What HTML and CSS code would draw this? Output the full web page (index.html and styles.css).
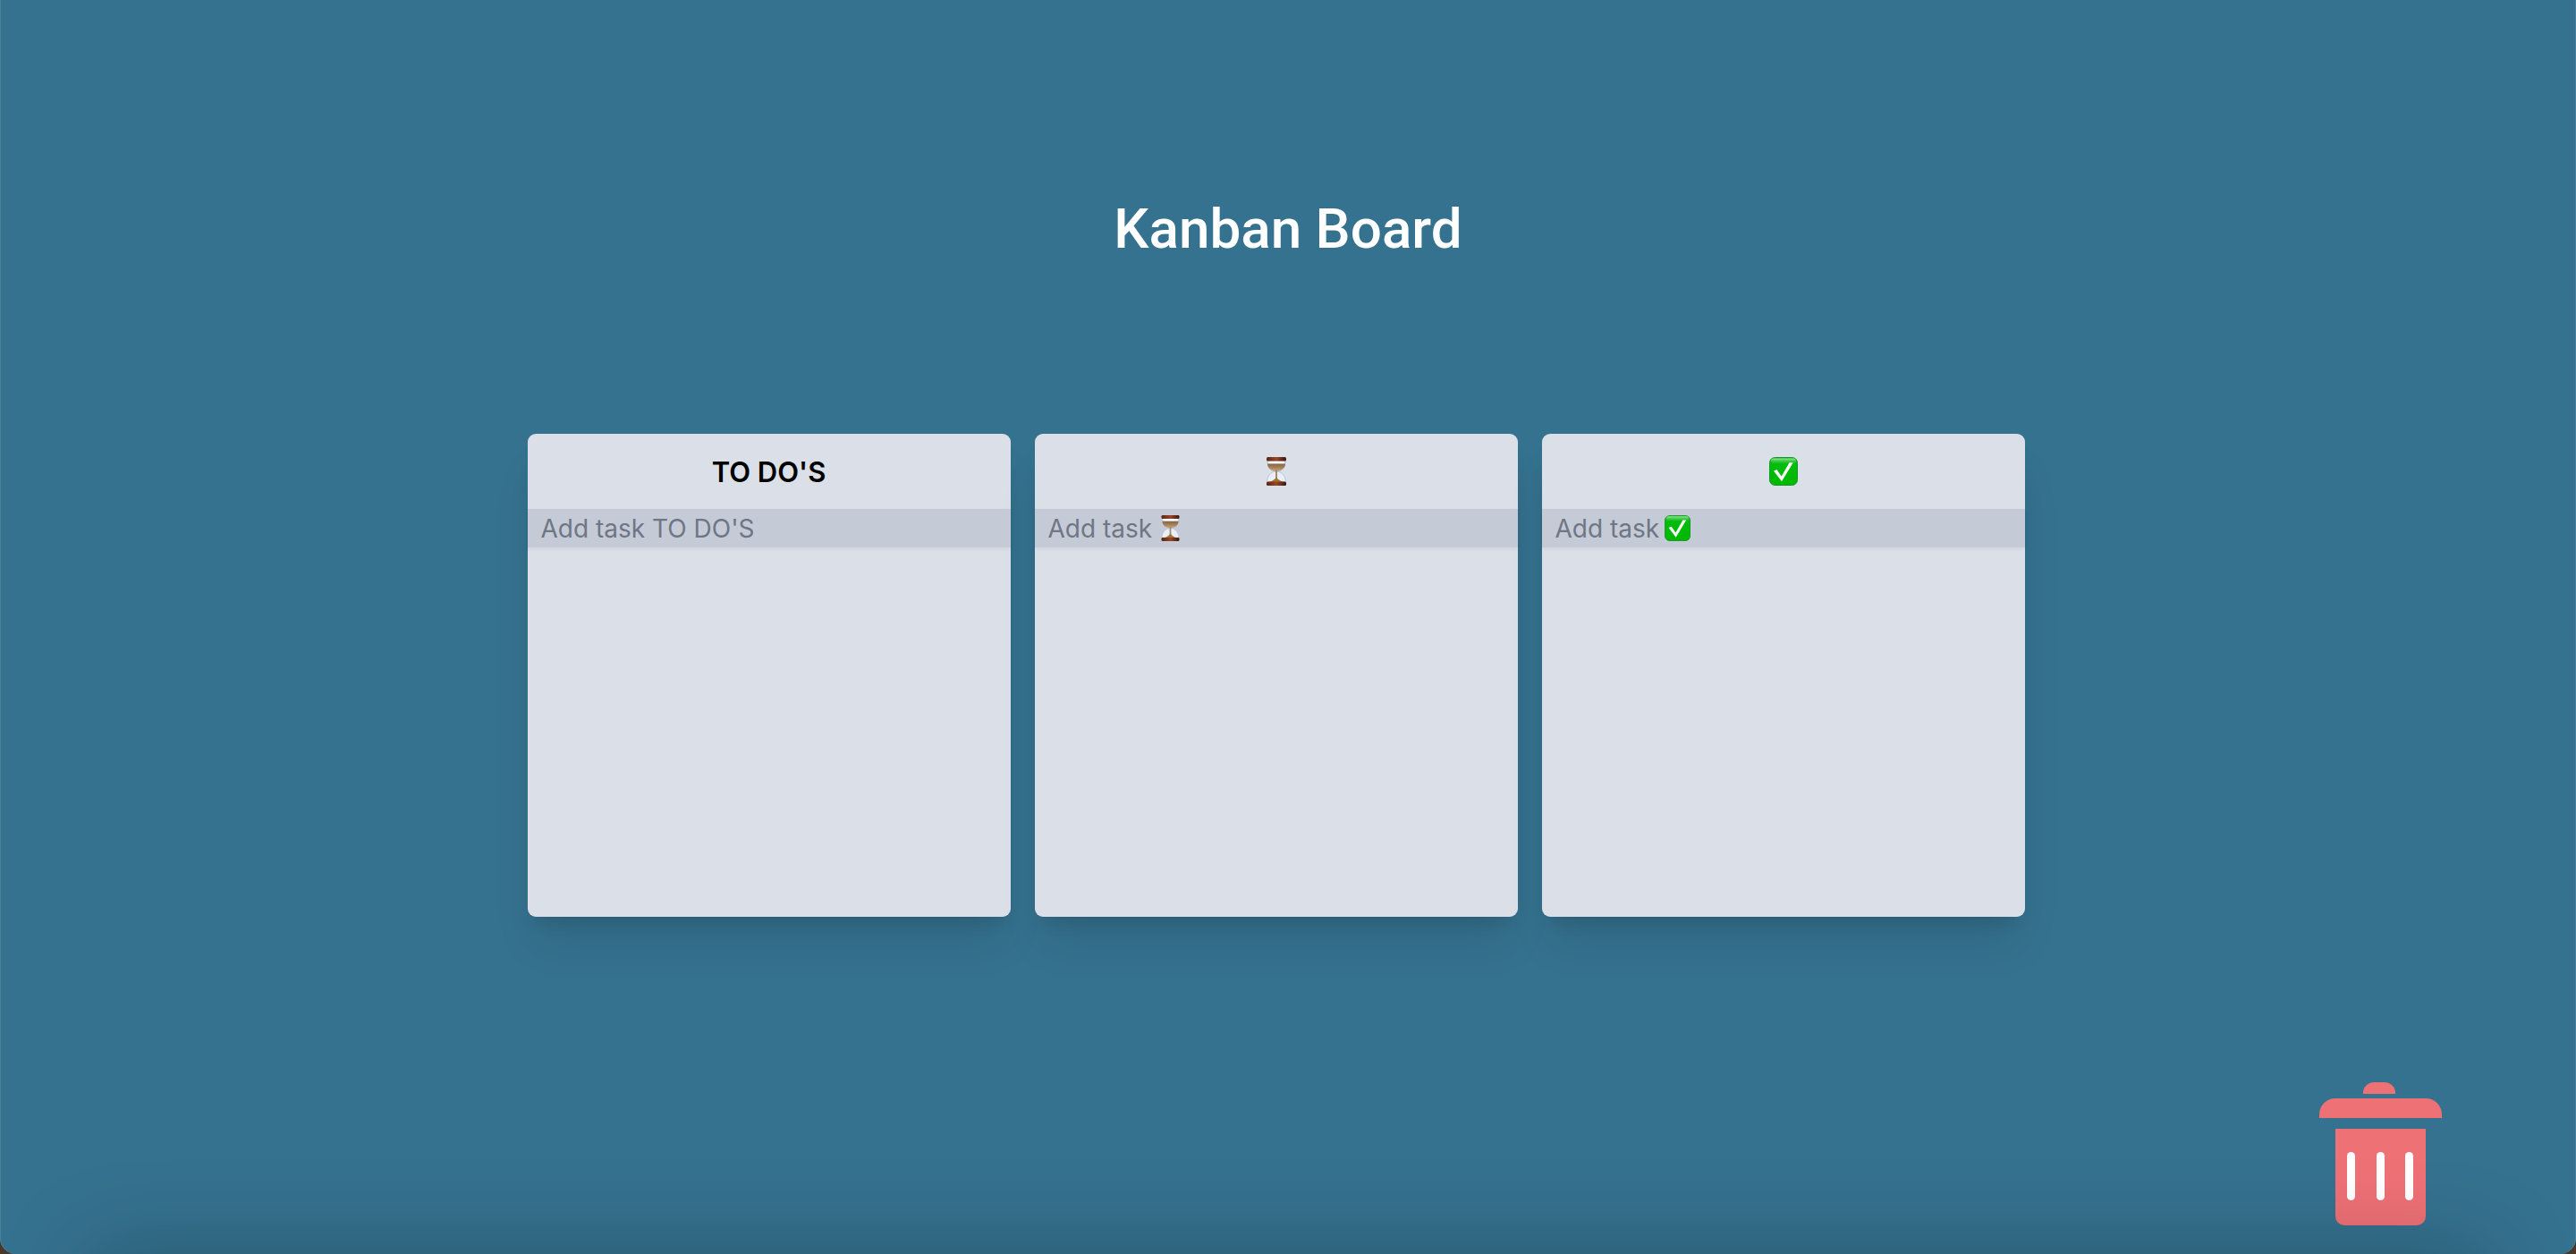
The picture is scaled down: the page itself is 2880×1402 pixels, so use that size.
FILE: index.html
```html
<!DOCTYPE html>
<html lang="en">
<head>
<meta charset="utf-8">
<meta name="viewport" content="width=device-width, initial-scale=1">
<title>Kanban Board</title>
<link rel="stylesheet" href="styles.css">
</head>
<body>
<svg class="defs" aria-hidden="true">
  <defs>
    <linearGradient id="green" x1="0" y1="0" x2="0" y2="1">
      <stop offset="0" stop-color="#1fae2b"/><stop offset=".25" stop-color="#00bd0c"/><stop offset="1" stop-color="#00b800"/>
    </linearGradient>
    <linearGradient id="gloss" x1="0" y1="0" x2="0" y2="1">
      <stop offset="0" stop-color="#8ee88f"/><stop offset="1" stop-color="#2cc934" stop-opacity=".2"/>
    </linearGradient>
    <linearGradient id="wood" x1="0" y1="0" x2="1" y2="0">
      <stop offset="0" stop-color="#5a2412"/><stop offset=".5" stop-color="#96482a"/><stop offset="1" stop-color="#3c170c"/>
    </linearGradient>
    <linearGradient id="sand" x1="0" y1="0" x2="0" y2="1">
      <stop offset="0" stop-color="#8a6440"/><stop offset=".5" stop-color="#a5825c"/><stop offset="1" stop-color="#c9b8a6"/>
    </linearGradient>
    <symbol id="check" viewBox="0 0 32 32">
      <rect x=".5" y=".5" width="31" height="31" rx="6" fill="url(#green)" stroke="#16952a"/>
      <rect x="2" y="1.5" width="28" height="6" rx="3" fill="url(#gloss)"/>
      <path d="M5 15.500 8.500 14l5.200 7.500L22.500 6.200h4.200L14 27.200z" fill="#fff"/>
    </symbol>
    <symbol id="hourglass" viewBox="0 0 32 32">
      <path d="M6 4h20c0 7-4 10-8.500 12 4.500 1 9 5 9 12h-21c0-7 4.500-11 9-12C10 14 6 11 6 4z" fill="#e9eef7" stroke="#b9c2dc"/>
      <path d="M6 7.500h20c0 5-4.500 8-9 9h-2C10.500 15.500 6 12.500 6 7.500z" fill="url(#sand)"/>
      <path d="M7 4.500h18v2H7z" fill="#fff"/>
      <path d="M15 14h2v11h-2z" fill="#a98a68"/>
      <path d="M7.500 28c4-1 7-3 8.500-5.500 1.500 2.500 4.500 4.500 8.500 5.500z" fill="#a07432"/>
      <rect x="5" y="0" width="22" height="4.500" rx="1.500" fill="url(#wood)"/>
      <rect x="5" y="27.500" width="22" height="4.500" rx="1.500" fill="url(#wood)"/>
    </symbol>
  </defs>
</svg>
<div class="window">
  <h1 class="title">Kanban Board</h1>
  <main class="board">
    <section class="column">
      <h2 class="column-title">TO DO'S</h2>
      <div class="field">
        <input class="task-input" type="text" aria-label="Add task TO DO'S" placeholder="Add task TO DO'S">
      </div>
    </section>
    <section class="column">
      <h2 class="column-title"><svg class="icon" role="img" aria-label="In progress"><use href="#hourglass"/></svg></h2>
      <div class="field">
        <input class="task-input" type="text" aria-label="Add task in progress" placeholder="Add task">
        <svg class="field-icon" aria-hidden="true"><use href="#hourglass"/></svg>
      </div>
    </section>
    <section class="column">
      <h2 class="column-title"><svg class="icon" role="img" aria-label="Done"><use href="#check"/></svg></h2>
      <div class="field">
        <input class="task-input" type="text" aria-label="Add task done" placeholder="Add task">
        <svg class="field-icon" aria-hidden="true"><use href="#check"/></svg>
      </div>
    </section>
  </main>
  <button class="trash" type="button" aria-label="Delete task">
    <svg class="trash-icon" viewBox="0 0 137 160" aria-hidden="true">
      <g fill="#ee7176">
        <path d="M49 13v-1a12 12 0 0 1 12-12h12a12 12 0 0 1 12 12v1z"/>
        <path d="M0 40v-4a18 18 0 0 1 18-18h101a18 18 0 0 1 18 18v4z"/>
        <path d="M18 52h101v98a10 10 0 0 1-10 10H28a10 10 0 0 1-10-10z"/>
      </g>
      <g fill="#fff">
        <rect x="31" y="78" width="9" height="54" rx="4.500"/>
        <rect x="64" y="78" width="9" height="54" rx="4.500"/>
        <rect x="96" y="78" width="9" height="54" rx="4.500"/>
      </g>
    </svg>
  </button>
</div>
</body>
</html>
```
FILE: styles.css
```css
* {
  box-sizing: border-box;
}

body {
  margin: 0;
  background: #49382b;
  font-family: Inter, "Liberation Sans", sans-serif;
}

.defs {
  position: absolute;
  width: 0;
  height: 0;
}

.window {
  position: relative;
  min-height: 100vh;
  padding-top: 208px;
  overflow: hidden;
  background: #35728f;
  border-radius: 0 0 18px 18px;
  box-shadow: inset 1px 0 #4b819b, inset -1px 0 #4b819b;
}

/* soft shade along the bottom edge */
.window::after {
  content: "";
  position: absolute;
  top: 100%;
  left: 100px;
  right: 100px;
  height: 100px;
  box-shadow: 0 0 100px rgba(0, 0, 0, 0.25);
  pointer-events: none;
}

.title {
  margin: 0 0 181px;
  color: #fff;
  font-family: Roboto, Inter, sans-serif;
  font-size: 62px;
  font-weight: 500;
  line-height: 96px;
  text-align: center;
}

.board {
  display: flex;
  justify-content: center;
}

.column {
  width: 540px;
  min-height: 540px;
  margin-right: 27px;
  background: #dadfe8;
  border-radius: 9px;
  box-shadow: 0 36px 45px -9px rgba(0, 0, 0, 0.1), 0 14px 18px -9px rgba(0, 0, 0, 0.1);
}

.column-title {
  display: flex;
  align-items: center;
  justify-content: center;
  height: 84px;
  margin: 0;
  color: #000;
  font-size: 31px;
  font-weight: 600;
}

.icon {
  width: 32px;
  height: 32px;
}

.field {
  position: relative;
}

.task-input {
  display: block;
  width: 100%;
  height: 43px;
  padding: 0 15px;
  border: 0;
  border-radius: 0;
  background: #c5cbd6;
  color: #111827;
  font: inherit;
  font-size: 28px;
  box-shadow: 0 2px 4px rgba(0, 0, 0, 0.05);
}

.task-input::placeholder {
  color: #6f7685;
  opacity: 1;
}

.field-icon {
  position: absolute;
  top: 7px;
  left: 137px;
  width: 29px;
  height: 29px;
  pointer-events: none;
}

.trash {
  position: absolute;
  right: 150px;
  bottom: 32px;
  padding: 0;
  border: 0;
  background: none;
}

.trash-icon {
  display: block;
  width: 137px;
  height: 160px;
}
```
